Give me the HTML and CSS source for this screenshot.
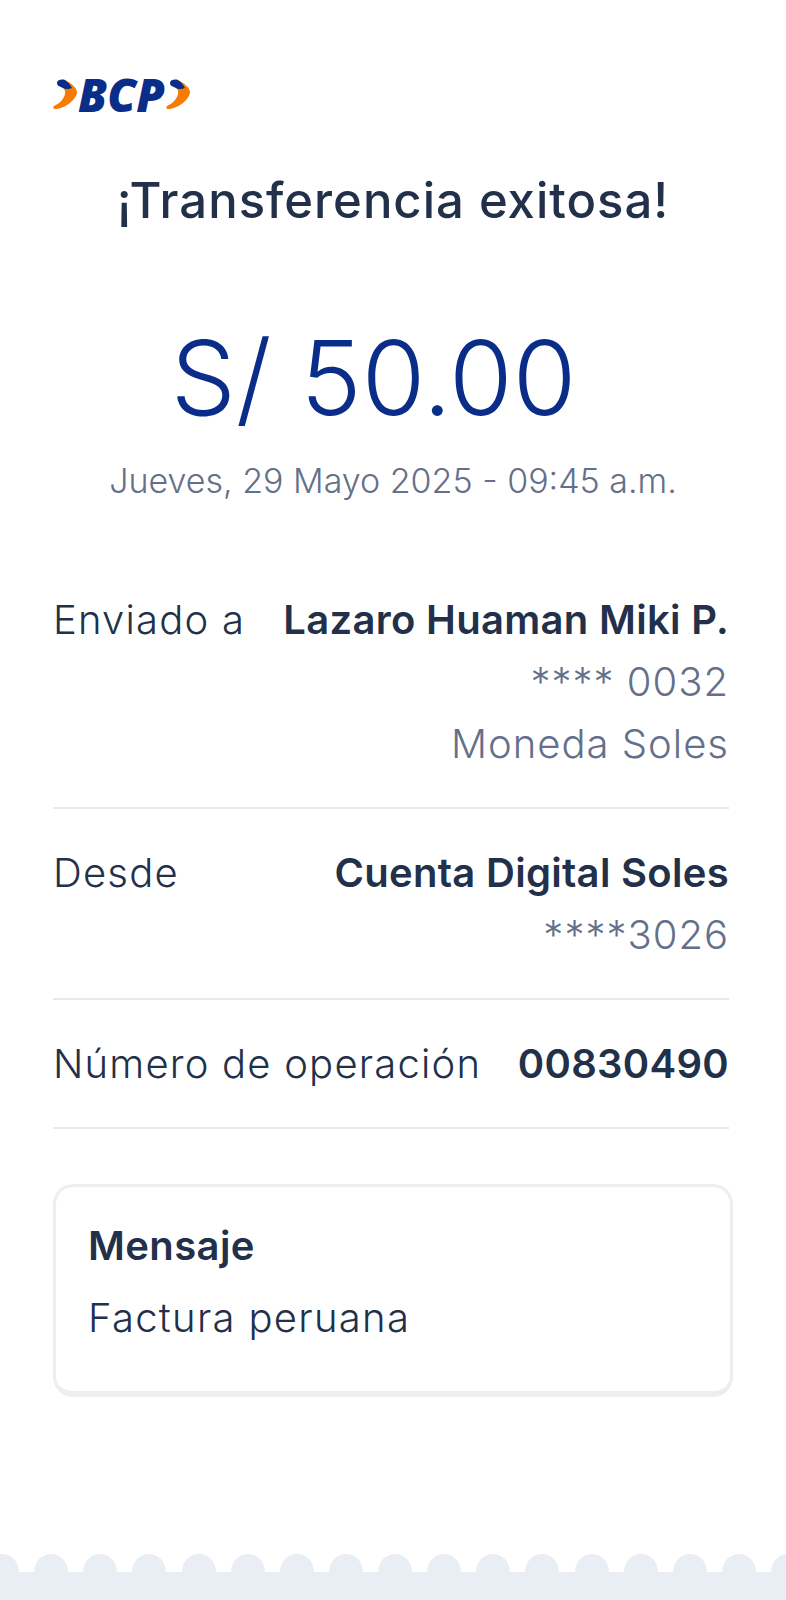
FILE: index.html
```html
<!DOCTYPE html>
<html lang="en">
<head>
  <meta charset="utf-8">
  <link rel="stylesheet" href="styles.css">
</head>
<body>
  <div class="receipt">
    <div class="logo">
      <svg class="chevron" viewBox="0 0 24 30"><use href="#chev"></use></svg>
      <span class="logo-text">BCP</span>
      <svg class="chevron" viewBox="0 0 24 30">
        <defs>
          <g id="chev">
            <path fill="#f57c00" d="M12 1 C18 4 24 9 24 13 C24 20 12 30 2 30 C0 30 0 28 1 27 C6 25 11 20 12 15 C13 12 11 9 8 8 Z"/>
            <path fill="#0a2d8a" d="M4 4 C4 1 8 0 11 0.5 C14 2 17 5 19 9 C15 11 11 10 8 8 C5 7 4 6 4 4 Z"/>
          </g>
        </defs>
        <use href="#chev"></use>
      </svg>
    </div>

    <h1 class="title">¡Transferencia exitosa!</h1>
    <div class="amount">S/ 50.00</div>
    <div class="date">Jueves, 29 Mayo 2025 - 09:45 a.m.</div>

    <div class="row row-first">
      <div class="row-label">Enviado a</div>
      <div class="row-value">
        <div class="strong">Lazaro Huaman Miki P.</div>
        <div class="muted">**** 0032</div>
        <div class="muted">Moneda Soles</div>
      </div>
    </div>
    <div class="row">
      <div class="row-label">Desde</div>
      <div class="row-value">
        <div class="strong">Cuenta Digital Soles</div>
        <div class="muted">****3026</div>
      </div>
    </div>
    <div class="row">
      <div class="row-label">Número de operación</div>
      <div class="row-value">
        <div class="strong">00830490</div>
      </div>
    </div>

    <div class="message">
      <div class="message-title">Mensaje</div>
      <div class="message-text">Factura peruana</div>
    </div>
  </div>

  <div class="footer">
    <div class="bumps">
      <span></span><span></span><span></span><span></span>
      <span></span><span></span><span></span><span></span>
      <span></span><span></span><span></span><span></span>
      <span></span><span></span><span></span><span></span>
      <span></span>
    </div>
    <div class="footer-band"></div>
  </div>
</body>
</html>
```

FILE: styles.css
```css
body {
  margin: 0;
  height: 1600px;
  overflow: hidden;
  display: flex;
  flex-direction: column;
  justify-content: space-between;
  background-color: #fff;
  color: #22304a;
  font-family: Inter, sans-serif;
}
.receipt {
  padding: 78px 53px 0;
}
.logo {
  display: flex;
  align-items: center;
  height: 32px;
}
.chevron {
  width: 24px;
  height: 30px;
  flex: none;
}
.logo-text {
  margin: 0 1px 0 1px;
  font-family: "Open Sans", sans-serif;
  font-size: 46px;
  font-weight: 800;
  font-style: italic;
  line-height: 32px;
  color: #0a2d8a;
}
.title {
  margin: 59px 0 0;
  text-align: center;
  font-size: 49px;
  font-weight: 500;
  letter-spacing: 1px;
  line-height: 64px;
}
.amount {
  margin-top: 80px;
  padding-right: 39px;
  text-align: center;
  font-size: 103px;
  font-weight: 300;
  line-height: 130px;
  color: #0a2d8a;
}
.date {
  margin-top: 16px;
  text-align: center;
  font-size: 34px;
  font-weight: 300;
  line-height: 44px;
  color: #64708a;
}
.row {
  display: flex;
  justify-content: space-between;
  margin-right: 4px;
  padding: 33px 0 32px;
  border-bottom: 2px solid #e9e9e9;
  font-size: 40px;
  line-height: 62px;
}
.row-first {
  margin-top: 53px;
}
.row-label {
  font-weight: 300;
  letter-spacing: 1.2px;
}
.row-value {
  text-align: right;
}
.strong {
  font-weight: 600;
  letter-spacing: 0.3px;
}
.muted {
  font-weight: 300;
  letter-spacing: 1px;
  color: #64708a;
}
.message {
  margin-top: 55px;
  height: 213px;
  box-sizing: border-box;
  padding: 29px 32px;
  border: 3px solid #eeeeee;
  border-bottom-width: 6px;
  border-radius: 20px;
}
.message-title {
  font-size: 40px;
  font-weight: 600;
  letter-spacing: 0.4px;
  line-height: 60px;
}
.message-text {
  margin-top: 12px;
  font-size: 40px;
  font-weight: 300;
  letter-spacing: 1.3px;
  line-height: 60px;
}
.footer {
  flex: none;
}
.bumps {
  display: flex;
  justify-content: space-between;
  margin: 0 -19px 0 -15px;
  height: 18px;
  overflow: hidden;
}
.bumps span {
  width: 34px;
  height: 36px;
  border-radius: 50%;
  background-color: #e9edf4;
}
.footer-band {
  height: 28px;
  background-color: #e9edf4;
}
```
